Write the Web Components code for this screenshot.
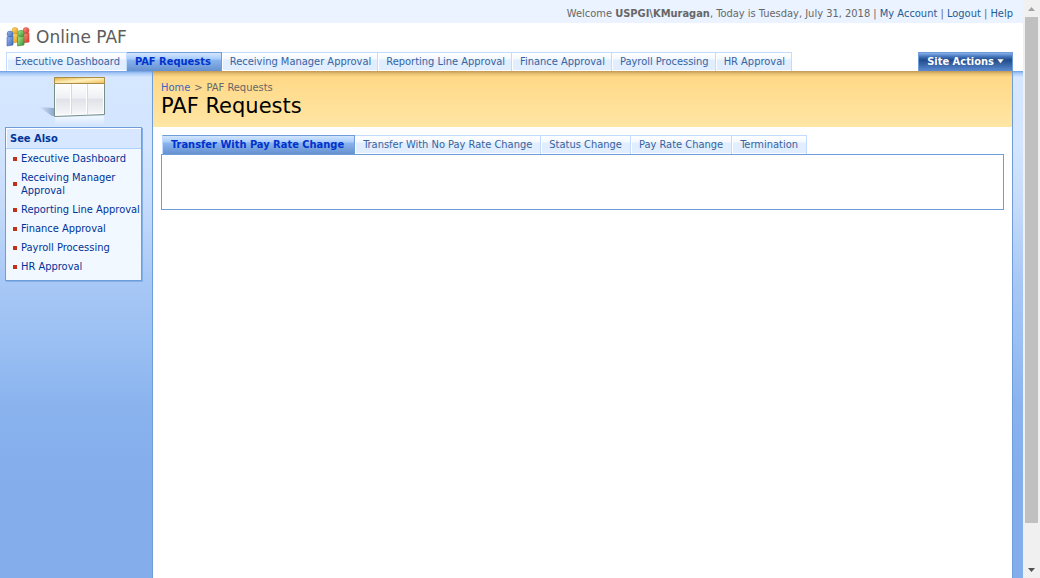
<!DOCTYPE html>
<html lang="en">
<head>
<meta charset="utf-8">
<title>PAF Requests</title>
<style>
html,body{margin:0;min-height:100%;background:#fff}
body{font:11px/13px "DejaVu Sans Condensed","DejaVu Sans",Tahoma,sans-serif;color:#676767}
</style>
</head>
<body>
<paf-app></paf-app>

<template id="t-app">
<style>
:host{display:flex;min-height:100vh}
.page{flex:1;min-width:0;display:flex;flex-direction:column}
.body{flex:1;display:flex;align-items:stretch}
.content{flex:1;min-width:0;background:#fff;border:solid #6f9dd9;border-width:0 1px}
.edge{width:10px}
.side,.edge{background:
 linear-gradient(#6a9ce0,rgba(130,175,240,.6) 2px,rgba(214,231,255,0)) 0 0/100% 6px no-repeat,
 linear-gradient(#d6e7ff,#d3e5ff 75px,#c5dbfa 135px,#a8c8f6 209px,#9bc0f3 269px,#8ab3ee 334px,#83aeeb 410px)}
.side{width:152px;flex:none}
.panel{padding:8px}
</style>
<div class="page">
 <welcome-bar></welcome-bar>
 <site-title>Online PAF</site-title>
 <top-nav></top-nav>
 <div class="body">
  <nav class="side" aria-label="See also"><see-also heading="See Also"></see-also></nav>
  <main class="content">
   <page-heading here="PAF Requests"></page-heading>
   <div class="panel"><request-tabs></request-tabs></div>
  </main>
  <div class="edge"></div>
 </div>
</div>
<scroll-rail></scroll-rail>
</template>

<template id="t-welcome">
<style>
:host{display:block;background:#eaf3ff;text-align:right;padding:7px 10px 3px 8px}
a{color:#1e5b97;text-decoration:none}
</style>
Welcome <b>USPGI\KMuragan</b>, Today is Tuesday, July 31, 2018 | <a href="#account">My Account</a> | <a href="#logout">Logout</a> | <a href="#help">Help</a>
</template>

<template id="t-title">
<style>
:host{display:flex;align-items:center;gap:6px;height:27px;padding:0 6px 2px;background:#fff;font:17px/20px "DejaVu Sans",Verdana,sans-serif;color:#5c5c5c}
svg{display:block}
</style>
<svg width="24" height="20" viewBox="0 0 24 20" aria-hidden="true">
 <defs>
  <linearGradient id="y" x2="1" y2="1"><stop stop-color="#ffe37a"/><stop offset="1" stop-color="#e39a12"/></linearGradient>
  <linearGradient id="r" x2="1" y2="1"><stop stop-color="#ff9a82"/><stop offset="1" stop-color="#d9302d"/></linearGradient>
  <linearGradient id="b" x2="1" y2="1"><stop stop-color="#9dbcf0"/><stop offset="1" stop-color="#3d68bd"/></linearGradient>
  <linearGradient id="g" x2="1" y2="1"><stop stop-color="#b5e893"/><stop offset="1" stop-color="#2f942f"/></linearGradient>
 </defs>
 <path d="M6 7L12 6L12 15L6 16Z" fill="url(#y)" stroke="#c98a1c" stroke-width=".6"/>
 <circle cx="9" cy="3.5" r="3" fill="url(#y)" stroke="#c98a1c" stroke-width=".5"/>
 <path d="M17 7L23 6L23 15L17 16Z" fill="url(#r)" stroke="#c43a30" stroke-width=".6"/>
 <circle cx="20" cy="3.5" r="3" fill="url(#r)" stroke="#c43a30" stroke-width=".5"/>
 <path d="M1 10L7 9L7 18L1 19Z" fill="url(#b)" stroke="#3a61ae" stroke-width=".6"/>
 <circle cx="4" cy="7" r="3" fill="url(#b)" stroke="#3a61ae" stroke-width=".5"/>
 <path d="M11.500 10L18 9L18 18L11.500 19Z" fill="url(#g)" stroke="#37862f" stroke-width=".6"/>
 <circle cx="15" cy="6.500" r="3.200" fill="url(#g)" stroke="#37862f" stroke-width=".5"/>
</svg>
<slot></slot>
</template>

<template id="t-strip">
<style>
:host{display:flex;min-width:0}
a{display:block;box-sizing:border-box;height:19px;padding:2px var(--tab-end,6px) 3px 8px;white-space:nowrap;text-decoration:none;color:#3764a0;
 border:solid #c2dcff;border-width:1px 1px 0 0;
 background:linear-gradient(#fff,#f4f9ff 6px,#e1eeff 7px,#e1eeff);box-shadow:inset 1px -1px #fff}
a.first{border-left-width:1px}
a[aria-current]{padding-right:10px;font-weight:bold;color:#0033cc;border-color:#6f9dd9;
 background:linear-gradient(#d4e6ff,#a9ccfb 6px,#8ab4ee 7px,#6591cf);box-shadow:none}
a.first[aria-current]{border-left-color:#c2dcff}
</style>
</template>

<template id="t-topnav">
<style>
:host{display:flex;align-items:flex-end;justify-content:space-between;padding:0 10px 0 6px;background:#fff}
button{height:19px;padding:0 8px 2px;border:1px solid #6f9dd9;border-bottom:0;border-radius:0;display:flex;align-items:center;gap:3px;
 font:bold 11px/13px "DejaVu Sans Condensed","DejaVu Sans",Tahoma,sans-serif;color:#fff;white-space:nowrap;
 background:linear-gradient(#84afe9,#3f6fb5 4px,#214b8c 7px,#5b8bd0)}
</style>
<tab-strip items="Executive Dashboard|PAF Requests|Receiving Manager Approval|Reporting Line Approval|Finance Approval|Payroll Processing|HR Approval" current="1"></tab-strip>
<button type="button">Site Actions<svg width="7" height="5" viewBox="0 0 7 5" aria-hidden="true"><path d="M0 0H7L3.500 4.500Z" fill="#fff" stroke="#555" stroke-width=".5"/></svg></button>
</template>

<template id="t-seealso">
<style>
:host{display:block;padding:4px 10px 0 5px}
svg{display:block;margin:0 auto 0 34px}
section{border:1px solid #6f9dd9;background:#f2f8ff;box-shadow:1px 1px #84afe9}
h2{margin:0;padding:4px 4px 3px;font-size:11px;line-height:13px;color:#003399;background:#d6e7ff;border-bottom:1px solid #add1ff;box-shadow:inset 1px 1px #fff}
ul{list-style:none;margin:0;padding:0 0 4px 7px}
li{display:flex;align-items:center;gap:4px;padding:3px 0}
li::before{content:"";flex:none;width:4px;height:4px;background:#c0311a}
a{color:#003399;text-decoration:none}
</style>
<svg width="68" height="52" viewBox="0 0 68 52" aria-hidden="true">
 <defs>
  <linearGradient id="bar" x2="1" y2="1"><stop stop-color="#e3ad33"/><stop offset=".5" stop-color="#fff0bd"/><stop offset="1" stop-color="#efbd50"/></linearGradient>
  <linearGradient id="cell" x2="0" y2="1"><stop stop-color="#fff"/><stop offset=".45" stop-color="#eef0f4"/><stop offset=".5" stop-color="#dfe2e8"/><stop offset="1" stop-color="#f8f8fa"/></linearGradient>
  <linearGradient id="sh"><stop stop-color="#8fa8c8" stop-opacity="0"/><stop offset="1" stop-color="#8ea8cc"/></linearGradient>
  <linearGradient id="ref" x2="0" y2="1"><stop stop-color="#fff" stop-opacity=".7"/><stop offset="1" stop-color="#fff" stop-opacity="0"/></linearGradient>
 </defs>
 <path d="M0 32L15 33V41H13Z" fill="url(#sh)"/>
 <path d="M16 42L65 41V49L16 50Z" fill="url(#ref)"/>
 <path d="M15.500 2.500H65.500V39.500L15.500 41.500Z" fill="#fff" stroke="#788f89"/>
 <path d="M17 9H31V39L17 40ZM33 9H47V38.500L33 39ZM49 9H64V38L49 38.500Z" fill="url(#cell)"/>
 <path d="M32.500 9V39M48.500 9V39" stroke="#c4c9cf" stroke-width=".7"/>
 <path d="M15.500 2.500H65.500V8.500H15.500Z" fill="url(#bar)" stroke="#a98c48"/>
</svg>
<section><h2></h2><ul></ul></section>
</template>

<template id="t-heading">
<style>
:host{display:block;height:56px;box-sizing:border-box;padding:10px 8px 0 8px;background:
 linear-gradient(rgba(130,90,40,.5),rgba(160,110,40,.2) 3px,rgba(255,215,130,0)) 0 0/100% 6px no-repeat,
 linear-gradient(#ffd784,#ffe6a4)}
nav{display:flex;gap:4px}
a{color:#3966bf;text-decoration:none}
h1{margin:0;font:21px/25px "DejaVu Sans",Tahoma,sans-serif;color:#000}
</style>
<nav aria-label="Breadcrumb"><a href="#home">Home</a><span>&gt;</span><span class="here"></span></nav>
<h1></h1>
</template>

<template id="t-tabs">
<style>
:host{display:block}
tab-strip{--tab-end:8px;padding-left:1px}
.box{height:54px;border:1px solid #6f9dd9;background:#fff}
</style>
<tab-strip items="Transfer With Pay Rate Change|Transfer With No Pay Rate Change|Status Change|Pay Rate Change|Termination" current="0"></tab-strip>
<div class="box"></div>
</template>

<template id="t-rail">
<style>
:host{display:flex;flex-direction:column;align-items:center;width:17px;height:100vh;position:sticky;top:0;background:#f0f0f0}
svg{display:block;height:17px;width:17px;flex:none}
.track{flex:1;width:13px}
.thumb{height:93%;background:#c0c0c0}
</style>
<svg viewBox="0 0 17 17" aria-hidden="true"><path d="M5 11H12L8.500 7Z" fill="#a3a3a3"/></svg>
<div class="track"><div class="thumb"></div></div>
<svg viewBox="0 0 17 17" aria-hidden="true"><path d="M5 7H12L8.500 11Z" fill="#505050"/></svg>
</template>

<script>
class Base extends HTMLElement{
  constructor(){
    super();
    this.attachShadow({mode:'open'}).append(document.getElementById(this.constructor.tpl).content.cloneNode(true));
  }
  $(s){return this.shadowRoot.querySelector(s);}
}
function link(text){
  const a=document.createElement('a');
  a.href='#'+text.toLowerCase().replace(/\s+/g,'-');
  a.textContent=text;
  return a;
}
class TabStrip extends Base{
  static tpl='t-strip';
  connectedCallback(){
    this.getAttribute('items').split('|').forEach((t,i)=>{
      const a=link(t);
      if(i===0)a.className='first';
      if(i===+this.getAttribute('current'))a.setAttribute('aria-current','page');
      this.shadowRoot.append(a);
    });
  }
}
class SeeAlso extends Base{
  static tpl='t-seealso';
  connectedCallback(){
    this.$('h2').textContent=this.getAttribute('heading');
    for(const t of ['Executive Dashboard','Receiving Manager Approval','Reporting Line Approval','Finance Approval','Payroll Processing','HR Approval']){
      const li=document.createElement('li');
      li.append(link(t));
      this.$('ul').append(li);
    }
  }
}
class PageHeading extends Base{
  static tpl='t-heading';
  connectedCallback(){
    this.$('.here').textContent=this.$('h1').textContent=this.getAttribute('here');
  }
}
customElements.define('tab-strip',TabStrip);
customElements.define('see-also',SeeAlso);
customElements.define('page-heading',PageHeading);
customElements.define('welcome-bar',class extends Base{static tpl='t-welcome'});
customElements.define('site-title',class extends Base{static tpl='t-title'});
customElements.define('top-nav',class extends Base{static tpl='t-topnav'});
customElements.define('request-tabs',class extends Base{static tpl='t-tabs'});
customElements.define('scroll-rail',class extends Base{static tpl='t-rail'});
customElements.define('paf-app',class extends Base{static tpl='t-app'});
</script>
</body>
</html>
